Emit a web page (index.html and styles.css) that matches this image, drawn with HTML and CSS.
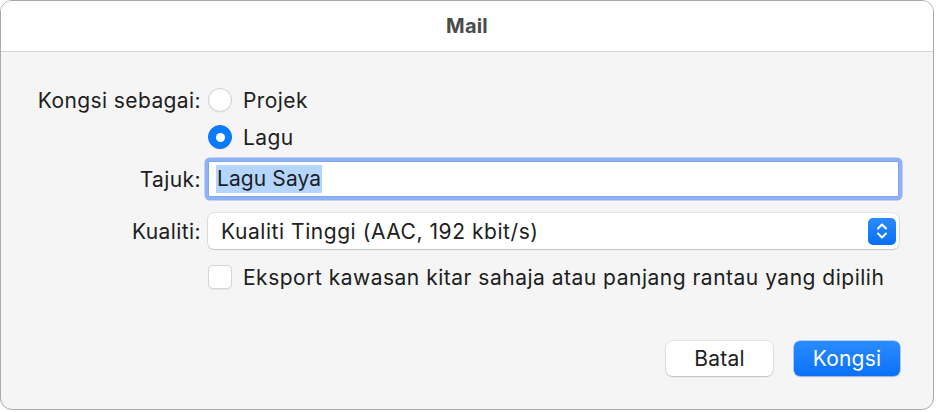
FILE: index.html
```html
<!DOCTYPE html>
<html lang="ms">
<head>
<meta charset="utf-8">
<title>Mail</title>
<link rel="stylesheet" href="styles.css">
</head>
<body>
<div class="window">
  <div class="titlebar">Mail</div>
  <div class="content">
    <div class="form">
      <div class="label row-1">Kongsi sebagai:</div>
      <div class="control row-1">
        <span class="radio"></span><span class="opt">Projek</span>
      </div>
      <div class="label row-2"></div>
      <div class="control row-2">
        <span class="radio on"></span><span class="opt">Lagu</span>
      </div>
      <div class="label row-3">Tajuk:</div>
      <div class="control row-3">
        <div class="field"><span class="sel">Lagu Saya</span></div>
      </div>
      <div class="label row-4">Kualiti:</div>
      <div class="control row-4">
        <div class="popup">
          <span class="popup-text">Kualiti Tinggi (AAC, 192 kbit/s)</span>
          <span class="stepper">
            <svg width="14" height="20" viewBox="0 0 14 20"><path d="M3 7.5 L7 3.5 L11 7.5 M3 12.5 L7 16.5 L11 12.5" fill="none" stroke="#fff" stroke-width="2" stroke-linecap="round" stroke-linejoin="round"/></svg>
          </span>
        </div>
      </div>
      <div class="label row-5"></div>
      <div class="control row-5">
        <span class="check"></span><span class="opt long">Eksport kawasan kitar sahaja atau panjang rantau yang dipilih</span>
      </div>
    </div>
    <div class="buttons">
      <button class="btn">Batal</button>
      <button class="btn primary">Kongsi</button>
    </div>
  </div>
</div>
</body>
</html>
```
FILE: styles.css
```css
html, body {
  margin: 0;
  padding: 0;
  background: #ffffff;
}
body {
  font-family: Inter, "Noto Sans", "Liberation Sans", sans-serif;
  color: #202020;
  font-size: 21px;
  letter-spacing: 0.4px;
}
.window {
  width: 932px;
  height: 408px;
  border: 1px solid #a9a9a9;
  border-radius: 12px;
  overflow: hidden;
  background: #f5f5f5;
  display: flex;
  flex-direction: column;
}
.titlebar {
  height: 50px;
  background: #ffffff;
  border-bottom: 1px solid #d6d6d6;
  display: flex;
  align-items: center;
  justify-content: center;
  font-weight: 700;
  font-size: 20px;
  color: #4b4b4b;
  letter-spacing: 0.2px;
}
.content {
  flex: 1;
  padding: 36px 33px 0 35px;
  display: flex;
  flex-direction: column;
}
.form {
  display: grid;
  grid-template-columns: 165px 691px;
  column-gap: 7px;
}
.label {
  text-align: right;
  display: flex;
  align-items: center;
  justify-content: flex-end;
  white-space: nowrap;
}
.control {
  display: flex;
  align-items: center;
}
.row-1 { height: 24px; }
.row-2 { height: 24px; margin-top: 13px; }
.row-3 { height: 44px; margin-top: 8px; }
.row-4 { height: 36px; margin-top: 12px; }
.row-5 { height: 24px; margin-top: 16px; }
.radio {
  width: 22px;
  height: 22px;
  border-radius: 50%;
  background: #ffffff;
  border: 1px solid #d2d2d2;
  box-shadow: 0 0.5px 1px rgba(0,0,0,0.08);
  flex: none;
  position: relative;
}
.radio.on {
  background: #0a7bff;
  border-color: #0a74f5;
}
.radio.on::after {
  content: "";
  position: absolute;
  left: 6.5px;
  top: 6.5px;
  width: 9px;
  height: 9px;
  border-radius: 50%;
  background: #ffffff;
}
.opt {
  margin-left: 11px;
  white-space: nowrap;
}
.long { letter-spacing: 0.5px; }
.field {
  width: 682px;
  height: 34px;
  background: #ffffff;
  border: 1px solid #80a6f0;
  border-radius: 2px;
  box-shadow: 0 0 0 3.5px #8fb2f6;
  display: flex;
  align-items: center;
  padding-left: 7px;
}
.sel {
  background: #b4d6fe;
  height: 28px;
  line-height: 28px;
  padding: 0 1px;
  color: #1e1e1e;
  letter-spacing: 0.1px;
}
.popup {
  width: 691px;
  height: 36px;
  box-sizing: border-box;
  background: #ffffff;
  border-radius: 6px;
  box-shadow: 0 0 0 0.5px rgba(0,0,0,0.16), 0 1px 1.5px rgba(0,0,0,0.14);
  display: flex;
  align-items: center;
  justify-content: space-between;
  padding: 0 3px 0 13px;
}
.popup-text { letter-spacing: 0.55px; }
.stepper {
  width: 28px;
  height: 27px;
  border-radius: 5px;
  background: linear-gradient(#2a8cff, #0a6ef5);
  display: flex;
  align-items: center;
  justify-content: center;
}
.check {
  width: 24px;
  height: 24px;
  box-sizing: border-box;
  border: 1px solid #d5d5d5;
  border-radius: 5px;
  background: #ffffff;
  box-shadow: 0 0.5px 1px rgba(0,0,0,0.06);
  flex: none;
  margin-left: 0;
}
.check + .opt { margin-left: 11px; }
.buttons {
  display: flex;
  justify-content: flex-end;
  gap: 21px;
  margin-top: 52px;
}
.btn {
  font-family: inherit;
  font-size: 21px;
  letter-spacing: 0.2px;
  height: 35px;
  width: 107px;
  border: none;
  border-radius: 6px;
  background: #ffffff;
  color: #202020;
  box-shadow: 0 0 0 0.5px rgba(0,0,0,0.15), 0 1px 1.5px rgba(0,0,0,0.15);
  padding: 0;
}
.btn.primary {
  width: 106px;
  background: linear-gradient(#2a8cff, #0a71f7);
  color: #ffffff;
  box-shadow: 0 0 0 0.5px rgba(0,90,230,0.5), 0 1px 1.5px rgba(0,0,0,0.15);
}
```
